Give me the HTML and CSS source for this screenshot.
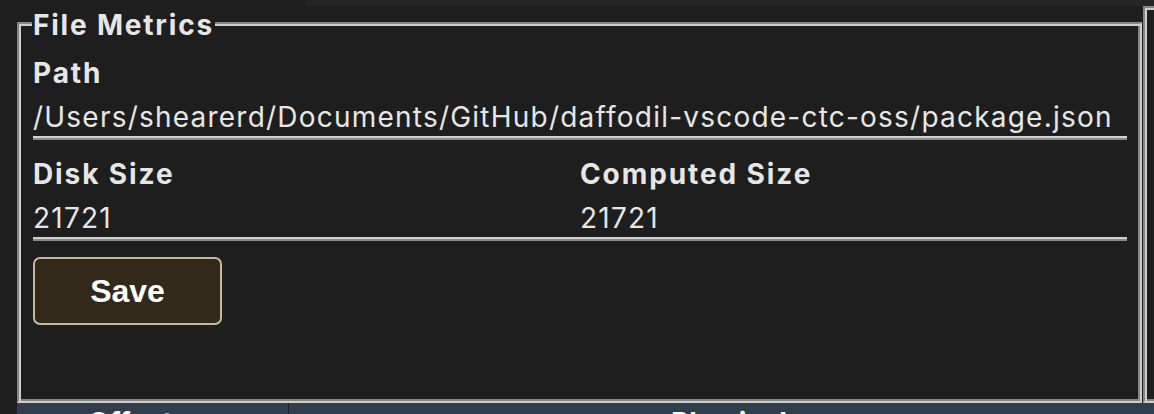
FILE: index.html
```html
<!DOCTYPE html>
<html lang="en">
<head>
<meta charset="utf-8">
<title>File Metrics</title>
<link rel="stylesheet" href="styles.css">
</head>
<body>
<div class="topbar"></div>
<div class="panels">
  <fieldset class="metrics">
    <legend class="legend">File Metrics</legend>
    <div class="field">
      <div class="label">Path</div>
      <div class="value value-line">/Users/shearerd/Documents/GitHub/daffodil-vscode-ctc-oss/package.json</div>
    </div>
    <div class="row">
      <div class="field">
        <div class="label">Disk Size</div>
        <div class="value">21721</div>
      </div>
      <div class="field">
        <div class="label">Computed Size</div>
        <div class="value">21721</div>
      </div>
    </div>
    <button class="save" type="button">Save</button>
  </fieldset>
  <fieldset class="metrics next"></fieldset>
</div>
<div class="strip">
  <div class="col col-a">Offset</div>
  <div class="col col-b">Physical</div>
</div>
</body>
</html>
```

FILE: styles.css
```css
html, body {
  margin: 0;
  padding: 0;
  background: #1e1e1e;
  overflow: hidden;
  height: 414px;
}
body {
  font-family: "Inter", "Noto Sans", sans-serif;
  color: #e6e6e6;
  font-size: 28px;
}
.topbar {
  height: 6px;
  margin-left: 306px;
  background: #252526;
}
.panels {
  display: flex;
  margin-left: 17px;
  width: 1400px;
}
.metrics {
  flex: 0 0 auto;
  box-sizing: border-box;
  width: 1125px;
  margin: 0;
  padding: 16px 13px 76px 14px;
  border: 2px solid;
  border-color: #858585 #cdcdcd #cdcdcd #858585;
  box-shadow: inset 2px 2px 0 #cdcdcd, inset -2px -2px 0 #858585;
  min-width: 0;
}
.next {
  width: 300px;
  margin-left: 1px;
}
.legend {
  font-weight: 700;
  line-height: 30px;
  padding: 4px 1px 0;
  margin-left: -1px;
  letter-spacing: 1.8px;
  background: #1e1e1e;
}
.label {
  font-weight: 700;
  line-height: 34px;
  margin-bottom: 10px;
  letter-spacing: 1.9px;
}
.value {
  line-height: 34px;
  padding-bottom: 2px;
  white-space: nowrap;
  letter-spacing: 1.22px;
}
.value-line {
  border-bottom: 2px solid #d0d0d0;
  box-shadow: 0 2px 0 #8a8a8a;
}
.row {
  display: grid;
  grid-template-columns: 1fr 1fr;
  margin-top: 19px;
  border-bottom: 2px solid #d0d0d0;
  box-shadow: 0 2px 0 #8a8a8a;
}
.save {
  display: block;
  margin-top: 18px;
  width: 189px;
  height: 68px;
  border: 2px solid #c9b99b;
  border-radius: 7px;
  background: #33291a;
  color: #ffffff;
  font-family: "Liberation Sans", Arial, sans-serif;
  font-weight: 700;
  font-size: 32px;
  padding: 0;
}
.strip {
  display: flex;
  margin-left: 17px;
  height: 40px;
  background: #303f4b;
}
.col {
  font-weight: 700;
  color: #ffffff;
  line-height: 34px;
  padding-top: 3px;
}
.col-a {
  width: 272px;
  border-right: 1px solid #1e1e1e;
  padding-left: 71px;
  box-sizing: border-box;
}
.col-b {
  padding-left: 382px;
}
```
